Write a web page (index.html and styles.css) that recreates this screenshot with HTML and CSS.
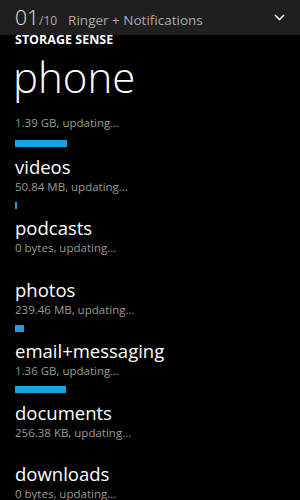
FILE: index.html
```html
<!DOCTYPE html>
<html lang="en">
<head>
    <meta charset="UTF-8">
    <meta name="viewport" content="width=device-width, initial-scale=1.0">
    <title>Storage Sense</title>
    <link rel="stylesheet" href="styles.css">
</head>
<body>
    <header class="tray">
        <span class="count">01</span><span class="count-total">/10</span>
        <span class="tray-title">Ringer + Notifications</span>
        <svg class="chevron" width="11" height="7" viewBox="0 0 11 7">
            <polyline points="1,1 5.5,5.5 10,1" fill="none" stroke="#e6e6e6" stroke-width="1.6"/>
        </svg>
    </header>

    <main class="page">
        <h2 class="app-name">STORAGE SENSE</h2>
        <h1 class="page-title">phone</h1>
        <p class="total">1.39 GB, updating...</p>
        <div class="bar total-bar" style="width: 52px"></div>

        <ul class="usage">
            <li>
                <div class="name">videos</div>
                <div class="size">50.84 MB, updating...</div>
                <div class="bar" style="width: 2px"></div>
            </li>
            <li>
                <div class="name">podcasts</div>
                <div class="size">0 bytes, updating...</div>
                <div class="bar" style="width: 0"></div>
            </li>
            <li>
                <div class="name">photos</div>
                <div class="size">239.46 MB, updating...</div>
                <div class="bar" style="width: 9px"></div>
            </li>
            <li>
                <div class="name">email+messaging</div>
                <div class="size">1.36 GB, updating...</div>
                <div class="bar" style="width: 51px"></div>
            </li>
            <li>
                <div class="name">documents</div>
                <div class="size">256.38 KB, updating...</div>
                <div class="bar" style="width: 0"></div>
            </li>
            <li>
                <div class="name">downloads</div>
                <div class="size">0 bytes, updating...</div>
                <div class="bar" style="width: 0"></div>
            </li>
        </ul>
    </main>
</body>
</html>
```

FILE: styles.css
```css
body {
    background-color: #000;
    color: #fff;
    font-family: "Open Sans", "Noto Sans", sans-serif;
    margin: 0;
    overflow: hidden;
}
.tray {
    background-color: #1f1f1f;
    height: 35px;
    box-sizing: border-box;
    padding: 6px 15px 0 15px;
    display: flex;
    align-items: baseline;
}
.count {
    font-size: 21px;
    line-height: 22px;
    font-weight: 300;
    color: #e0e0e0;
}
.count-total {
    font-size: 12px;
    color: #aaa;
}
.tray-title {
    font-size: 13.5px;
    color: #aaa;
    margin-left: 11px;
}
.chevron {
    margin-left: auto;
    align-self: center;
    margin-top: -6px;
}
.page {
    padding-left: 15px;
}
.app-name {
    font-size: 12.5px;
    font-weight: bold;
    line-height: 10px;
    margin: 0;
}
.page-title {
    font-size: 42px;
    font-weight: 300;
    line-height: 50px;
    margin: 7px 0 0 -2px;
}
.total {
    font-size: 11.5px;
    line-height: 16px;
    color: #999;
    margin: 13px 0 0 0;
}
.bar {
    background-color: #1ba1e2;
    height: 7px;
}
.total-bar {
    margin-top: 9px;
    margin-bottom: 8px;
}
.usage {
    list-style: none;
    margin: 0;
    padding: 0;
}
.usage li {
    height: 61.4px;
}
.name {
    font-size: 18.5px;
    line-height: 24px;
}
.size {
    font-size: 11.5px;
    line-height: 16px;
    color: #999;
}
.usage .bar {
    margin-top: 7px;
}
```
